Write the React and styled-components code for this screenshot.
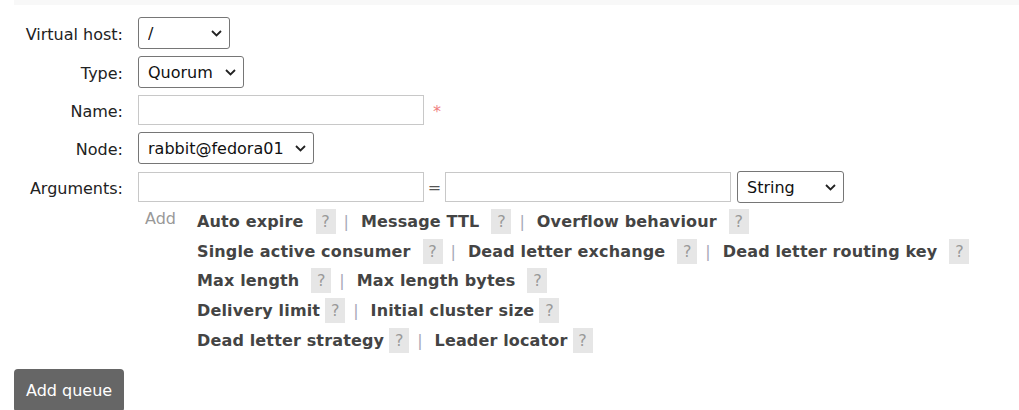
import React from 'react'
import styled, { createGlobalStyle } from 'styled-components'

const GlobalStyle = createGlobalStyle`
  body {
    margin: 0;
    background: #fff;
    font-family: "DejaVu Sans", Verdana, sans-serif;
    font-size: 16px;
    color: #222;
  }
`

const Page = styled.div`
  padding-left: 14px;
  height: 410px;
  overflow: hidden;
`

const TopStrip = styled.div`
  height: 5px;
  background: #f8f8f8;
`

const Form = styled.div`
  margin-top: 12px;
  display: grid;
  grid-template-columns: 109px 1fr;
  column-gap: 15px;
  row-gap: 7px;
  align-items: center;
`

const Label = styled.div`
  text-align: right;
  color: #222;
  padding-top: 2px;
`

const Controls = styled.div`
  display: flex;
  align-items: center;
`

const SelectWrap = styled.div`
  position: relative;
  width: ${p => p.w}px;
  height: ${p => p.h || 32}px;
  margin-left: ${p => p.ml || 0}px;
`

const NativeSelect = styled.select`
  appearance: none;
  -webkit-appearance: none;
  box-sizing: border-box;
  width: 100%;
  height: 100%;
  border: 1px solid #767676;
  border-radius: 3px;
  background: #fff;
  color: #111;
  font-family: "DejaVu Sans", Verdana, sans-serif;
  font-size: 16px;
  padding: 0 26px 0 9px;
  outline: none;
`

const Chevron = styled.svg`
  position: absolute;
  right: 8px;
  top: 50%;
  margin-top: -3px;
  pointer-events: none;
`

const TextInput = styled.input`
  box-sizing: border-box;
  width: 286px;
  height: 30px;
  border: 1px solid #c8c8c8;
  border-radius: 0;
  padding: 2px 4px;
  font-family: "DejaVu Sans", Verdana, sans-serif;
  font-size: 16px;
  outline: none;
`

const Required = styled.span`
  color: #f08080;
  font-size: 16px;
  margin-left: 9px;
  align-self: flex-start;
  margin-top: 7px;
`

const Equals = styled.span`
  color: #555;
  width: 21px;
  text-align: center;
`

const ArgHelp = styled.div`
  grid-column: 2;
  display: flex;
  margin-top: -3px;
`

const AddText = styled.div`
  color: #999;
  width: 52px;
  padding-left: 7px;
  padding-top: 2px;
`

const LinkRows = styled.div`
  display: flex;
  flex-direction: column;
`

const LinkRow = styled.div`
  display: flex;
  align-items: center;
  height: 29.6px;
`

const ArgLink = styled.span`
  font-weight: bold;
  color: #444;
  letter-spacing: 0.15px;
  margin-right: ${p => (p.tight ? 5 : 12)}px;
  cursor: pointer;
`

const Help = styled.span`
  display: inline-flex;
  align-items: center;
  justify-content: center;
  width: 20px;
  height: 25px;
  background: #e6e6e6;
  color: #999;
`

const Sep = styled.span`
  color: #a8a8b8;
  margin: 0 12px 0 8px;
`

const SubmitButton = styled.button`
  margin-top: 14px;
  background: #666;
  color: #fff;
  border: none;
  border-radius: 4px;
  padding: 0 12px;
  height: 43px;
  font-family: "DejaVu Sans", Verdana, sans-serif;
  font-size: 16px;
  cursor: pointer;
`

const Select = ({ w, ml, options }) => (
  <SelectWrap w={w} ml={ml}>
    <NativeSelect defaultValue={options[0]}>
      {options.map(o => (
        <option key={o}>{o}</option>
      ))}
    </NativeSelect>
    <Chevron width="11" height="7" viewBox="0 0 11 7">
      <polyline points="1,1 5.5,5.5 10,1" fill="none" stroke="#222" strokeWidth="1.8" />
    </Chevron>
  </SelectWrap>
)

const linkRows = [
  [['Auto expire'], ['Message TTL'], ['Overflow behaviour']],
  [['Single active consumer'], ['Dead letter exchange'], ['Dead letter routing key']],
  [['Max length'], ['Max length bytes']],
  [['Delivery limit', true], ['Initial cluster size', true]],
  [['Dead letter strategy', true], ['Leader locator', true]],
]

export default function App() {
  return (
    <Page>
      <GlobalStyle />
      <TopStrip />
      <Form>
        <Label>Virtual host:</Label>
        <Controls>
          <Select w={92} options={['/']} />
        </Controls>

        <Label>Type:</Label>
        <Controls>
          <Select w={106} options={['Quorum', 'Classic', 'Stream']} />
        </Controls>

        <Label>Name:</Label>
        <Controls>
          <TextInput type="text" />
          <Required>*</Required>
        </Controls>

        <Label>Node:</Label>
        <Controls>
          <Select w={176} options={['rabbit@fedora01']} />
        </Controls>

        <Label>Arguments:</Label>
        <Controls>
          <TextInput type="text" />
          <Equals>=</Equals>
          <TextInput type="text" />
          <Select w={107} ml={6} options={['String', 'Number', 'Boolean', 'List']} />
        </Controls>

        <ArgHelp>
          <AddText>Add</AddText>
          <LinkRows>
            {linkRows.map((row, i) => (
              <LinkRow key={i}>
                {row.map(([name, tight], j) => (
                  <React.Fragment key={name}>
                    {j > 0 && <Sep>|</Sep>}
                    <ArgLink tight={tight}>{name}</ArgLink>
                    <Help>?</Help>
                  </React.Fragment>
                ))}
              </LinkRow>
            ))}
          </LinkRows>
        </ArgHelp>
      </Form>
      <SubmitButton>Add queue</SubmitButton>
    </Page>
  )
}
